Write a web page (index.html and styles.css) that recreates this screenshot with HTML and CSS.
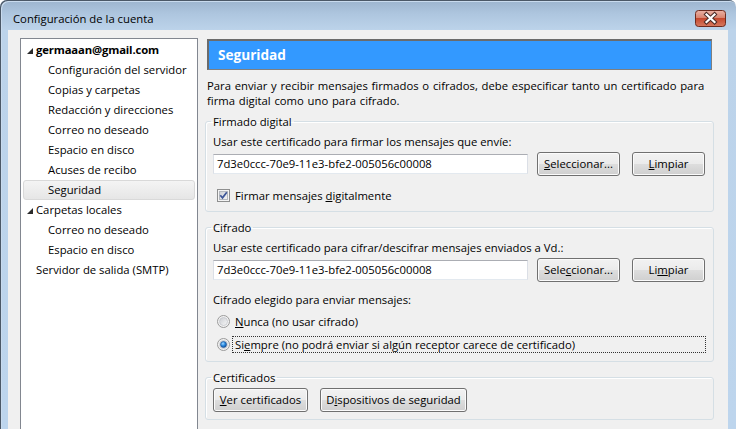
FILE: index.html
```html
<!DOCTYPE html>
<html lang="es">
<head>
<meta charset="utf-8">
<title>Configuración de la cuenta</title>
<link rel="stylesheet" href="styles.css">
</head>
<body>
<div class="window">
  <div class="titlebar">
    <span class="title">Configuración de la cuenta</span>
    <span class="close-btn">
      <svg width="31" height="17" viewBox="0 0 31 17">
        <defs>
          <linearGradient id="cg" x1="0" y1="0" x2="0" y2="1">
            <stop offset="0" stop-color="#eab3a6"/>
            <stop offset="0.45" stop-color="#d98470"/>
            <stop offset="0.5" stop-color="#c5492f"/>
            <stop offset="1" stop-color="#d77a60"/>
          </linearGradient>
        </defs>
        <rect x="0.5" y="0.5" width="30" height="16" rx="3" ry="3" fill="url(#cg)" stroke="#6e2b1e"/>
        <path d="M11.5 4.5 L19.5 12 M19.5 4.5 L11.5 12" stroke="#4a2a25" stroke-width="4.2" stroke-linecap="square" fill="none"/>
        <path d="M11.5 4.5 L19.5 12 M19.5 4.5 L11.5 12" stroke="#ffffff" stroke-width="2.2" stroke-linecap="square" fill="none"/>
      </svg>
    </span>
  </div>
  <div class="client">
    <ul class="tree">
      <li class="node lvl0 account"><span class="twisty"><svg width="6" height="6" viewBox="0 0 6 6"><polygon points="6,0 6,6 0,6" fill="#2b2b2b"/></svg></span>germaaan@gmail.com</li>
      <li class="node lvl1">Configuración del servidor</li>
      <li class="node lvl1">Copias y carpetas</li>
      <li class="node lvl1">Redacción y direcciones</li>
      <li class="node lvl1">Correo no deseado</li>
      <li class="node lvl1">Espacio en disco</li>
      <li class="node lvl1">Acuses de recibo</li>
      <li class="node lvl1 selected">Seguridad</li>
      <li class="node lvl0"><span class="twisty"><svg width="6" height="6" viewBox="0 0 6 6"><polygon points="6,0 6,6 0,6" fill="#2b2b2b"/></svg></span>Carpetas locales</li>
      <li class="node lvl1">Correo no deseado</li>
      <li class="node lvl1">Espacio en disco</li>
      <li class="node lvl0 noleaf">Servidor de salida (SMTP)</li>
    </ul>

    <div class="pane">
      <div class="pane-header">Seguridad</div>
      <p class="desc">Para enviar y recibir mensajes firmados o cifrados, debe especificar tanto un certificado para firma digital como uno para cifrado.</p>

      <fieldset class="group group-sign">
        <legend>Firmado digital</legend>
        <div class="label-line">Usar este certificado para firmar los mensajes que envíe:</div>
        <div class="cert-row">
          <div class="textbox">7d3e0ccc-70e9-11e3-bfe2-005056c00008</div>
          <button class="btn btn-select"><u>S</u>eleccionar...</button>
          <button class="btn btn-clear"><u>L</u>impiar</button>
        </div>
        <div class="check-row">
          <svg class="checkbox" width="13" height="13" viewBox="0 0 13 13">
            <defs>
              <linearGradient id="cbg" x1="0" y1="0" x2="1" y2="1">
                <stop offset="0" stop-color="#cbcfd5"/>
                <stop offset="1" stop-color="#f6f6f6"/>
              </linearGradient>
            </defs>
            <rect x="0.5" y="0.5" width="12" height="12" fill="#f4f4f4" stroke="#8e8f8f"/>
            <rect x="2.5" y="2.5" width="8" height="8" fill="url(#cbg)" stroke="#b4b8be"/>
            <path d="M3.3 6.3 L5.5 8.8 L9.8 3.2" stroke="#3c5597" stroke-width="1.7" fill="none"/>
          </svg>
          <span class="check-label">Firmar mensajes <u>d</u>igitalmente</span>
        </div>
      </fieldset>

      <fieldset class="group group-enc">
        <legend>Cifrado</legend>
        <div class="label-line">Usar este certificado para cifrar/descifrar mensajes enviados a Vd.:</div>
        <div class="cert-row">
          <div class="textbox">7d3e0ccc-70e9-11e3-bfe2-005056c00008</div>
          <button class="btn btn-select">Sele<u>c</u>cionar...</button>
          <button class="btn btn-clear">Li<u>m</u>piar</button>
        </div>
        <div class="label-line choice-title">Cifrado elegido para enviar mensajes:</div>
        <div class="radio-row first">
          <svg class="radio" width="13" height="13" viewBox="0 0 13 13">
            <defs>
              <linearGradient id="rg" x1="0" y1="0" x2="1" y2="1">
                <stop offset="0" stop-color="#c9ccd1"/>
                <stop offset="1" stop-color="#f8f8f8"/>
              </linearGradient>
            </defs>
            <circle cx="6.5" cy="6.5" r="6" fill="#f2f2f2" stroke="#9a9a9a"/>
            <circle cx="6.5" cy="6.5" r="4" fill="url(#rg)" stroke="#c4c7cc" stroke-width="0.8"/>
          </svg>
          <span class="radio-label"><u>N</u>unca (no usar cifrado)</span>
        </div>
        <div class="radio-row">
          <svg class="radio" width="13" height="13" viewBox="0 0 13 13">
            <defs>
              <radialGradient id="rdot" cx="0.4" cy="0.35" r="0.7">
                <stop offset="0" stop-color="#9fd6ff"/>
                <stop offset="0.5" stop-color="#2a8ae0"/>
                <stop offset="1" stop-color="#0c4a9a"/>
              </radialGradient>
            </defs>
            <circle cx="6.5" cy="6.5" r="6" fill="#f2f2f2" stroke="#9a9a9a"/>
            <circle cx="6.5" cy="6.5" r="4" fill="#dfe3e8" stroke="#c4c7cc" stroke-width="0.8"/>
            <circle cx="6.5" cy="6.5" r="3" fill="url(#rdot)" stroke="#1d4f8f" stroke-width="0.6"/>
          </svg>
          <span class="radio-label focused">Si<u>e</u>mpre (no podrá enviar si algún receptor carece de certificado)</span>
        </div>
      </fieldset>

      <fieldset class="group group-certs">
        <legend>Certificados</legend>
        <div class="btn-row">
          <button class="btn btn-view"><u>V</u>er certificados</button>
          <button class="btn btn-devices">D<u>i</u>spositivos de seguridad</button>
        </div>
      </fieldset>
    </div>
  </div>
</div>
</body>
</html>
```

FILE: styles.css
```css
html, body {
  margin: 0;
  padding: 0;
}

body {
  width: 736px;
  height: 429px;
  overflow: hidden;
  font-family: "Open Sans", "Noto Sans", sans-serif;
  font-size: 11.3px;
  color: #000;
  background: #ffffff;
}

.window {
  width: 736px;
  height: 429px;
  box-sizing: border-box;
  padding: 0 8px;
  display: flex;
  flex-direction: column;
  border-radius: 7px 7px 0 0;
  background: linear-gradient(#9cb4ce 0px, #aec6df 14px, #bcd3ea 30px, #bdd5ed 100%);
  box-shadow: inset 1px 1px 0 #4b5867, inset 2px 2px 0 #c9dbee;
}

.titlebar {
  height: 30px;
  box-sizing: border-box;
  padding-top: 6px;
  display: flex;
  align-items: center;
}

.title {
  padding-left: 5px;
  font-size: 11.3px;
  color: #000;
  line-height: 15px;
}

.close-btn {
  margin-left: auto;
  margin-right: 2px;
  height: 17px;
  display: block;
  margin-top: 1px;
}

.close-btn svg {
  display: block;
}

.client {
  flex: 1;
  background: #f0f0f0;
  display: flex;
  align-items: flex-start;
  padding: 8px 0 0 12px;
  overflow: hidden;
}

/* tree */
.tree {
  width: 178px;
  height: 430px;
  box-sizing: border-box;
  flex-shrink: 0;
  margin: 0;
  padding: 1px 1px;
  list-style: none;
  background: #ffffff;
  border: 1px solid #828790;
}

.node {
  height: 20px;
  line-height: 20px;
  margin: 0 1px;
  white-space: nowrap;
  display: flex;
  align-items: center;
}

.lvl0 {
  padding-left: 4px;
}

.lvl0.noleaf {
  padding-left: 13px;
}

.lvl1 {
  padding-left: 25px;
}

.account {
  font-weight: bold;
  letter-spacing: -0.15px;
}

.twisty {
  width: 9px;
  height: 20px;
  display: flex;
  align-items: center;
  padding-top: 1px;
  box-sizing: border-box;
}

.twisty svg {
  display: block;
}

.selected {
  background: linear-gradient(#f4f4f4, #e6e6e6);
  border: 1px solid #d9d9d9;
  border-radius: 3px;
  box-sizing: border-box;
  padding-left: 24px;
}

/* pane */
.pane {
  margin-left: 7px;
  width: 510px;
  flex-shrink: 0;
  display: flex;
  flex-direction: column;
}

.pane-header {
  margin: 1px 0 0 2px;
  width: 505px;
  height: 31px;
  box-sizing: border-box;
  background: #3399ff;
  border: 1px solid #7f7f7f;
  border-top: 2px solid #6b6b6b;
  border-left: 2px solid #6b6b6b;
  color: #ffffff;
  font-weight: bold;
  font-size: 13.6px;
  line-height: 27px;
  padding-left: 9px;
}

.desc {
  margin: 8px 0 0 2px;
  line-height: 15px;
  word-spacing: 0.8px;
}

.group {
  margin: 6px 1px 0 0;
  padding: 0 7px 8px 7px;
  border: 1px solid #d5dfe5;
  border-radius: 3px;
  box-shadow: inset 1px 1px 0 #ffffff;
  min-width: 0;
}

.group legend {
  margin-left: -2px;
  padding: 0 2px;
  line-height: 15px;
}

.group-enc,
.group-certs {
  margin-top: 8px;
}

.group-certs {
  padding-bottom: 7px;
}

.label-line {
  margin-top: 5px;
  line-height: 15px;
}

.choice-title {
  margin-top: 10px;
}

.cert-row {
  margin-top: 3px;
  height: 24px;
  display: flex;
  align-items: center;
}

.textbox {
  width: 315px;
  height: 20px;
  box-sizing: border-box;
  background: #ffffff;
  border: 1px solid #e3e9ef;
  border-top-color: #abadb3;
  border-left-color: #dbdfe6;
  border-right-color: #dbdfe6;
  padding-left: 3px;
  line-height: 18px;
}

.btn {
  height: 24px;
  box-sizing: border-box;
  font-family: inherit;
  font-size: inherit;
  color: #000;
  padding: 0;
  border: 1px solid #707070;
  border-radius: 3px;
  background: linear-gradient(#f2f2f2 0%, #ebebeb 48%, #dddddd 52%, #cfcfcf 100%);
  box-shadow: inset 0 0 0 1px #fbfbfb;
  line-height: 20px;
  text-align: center;
}

.btn-select {
  width: 83px;
  margin-left: 9px;
}

.btn-clear {
  width: 73px;
  margin-left: 12px;
}

.check-row {
  margin-top: 12px;
  height: 15px;
  display: flex;
  align-items: center;
}

.checkbox {
  margin-left: 4px;
  display: block;
}

.check-label {
  margin-left: 5px;
  line-height: 15px;
}

.radio-row {
  margin-top: 6px;
  display: flex;
  align-items: center;
}

.radio-row.first {
  margin-top: 6px;
}

.radio {
  margin-left: 4px;
  display: block;
  flex-shrink: 0;
}

.radio-label {
  flex: 1;
  margin-left: 2px;
  padding: 0 2px;
  line-height: 15px;
  border: 1px dotted transparent;
}

.radio-label.focused {
  border-color: #333;
}

.btn-row {
  margin-top: 3px;
  display: flex;
  align-items: center;
}

.btn-view {
  width: 95px;
}

.btn-devices {
  width: 147px;
  margin-left: 12px;
}
```
